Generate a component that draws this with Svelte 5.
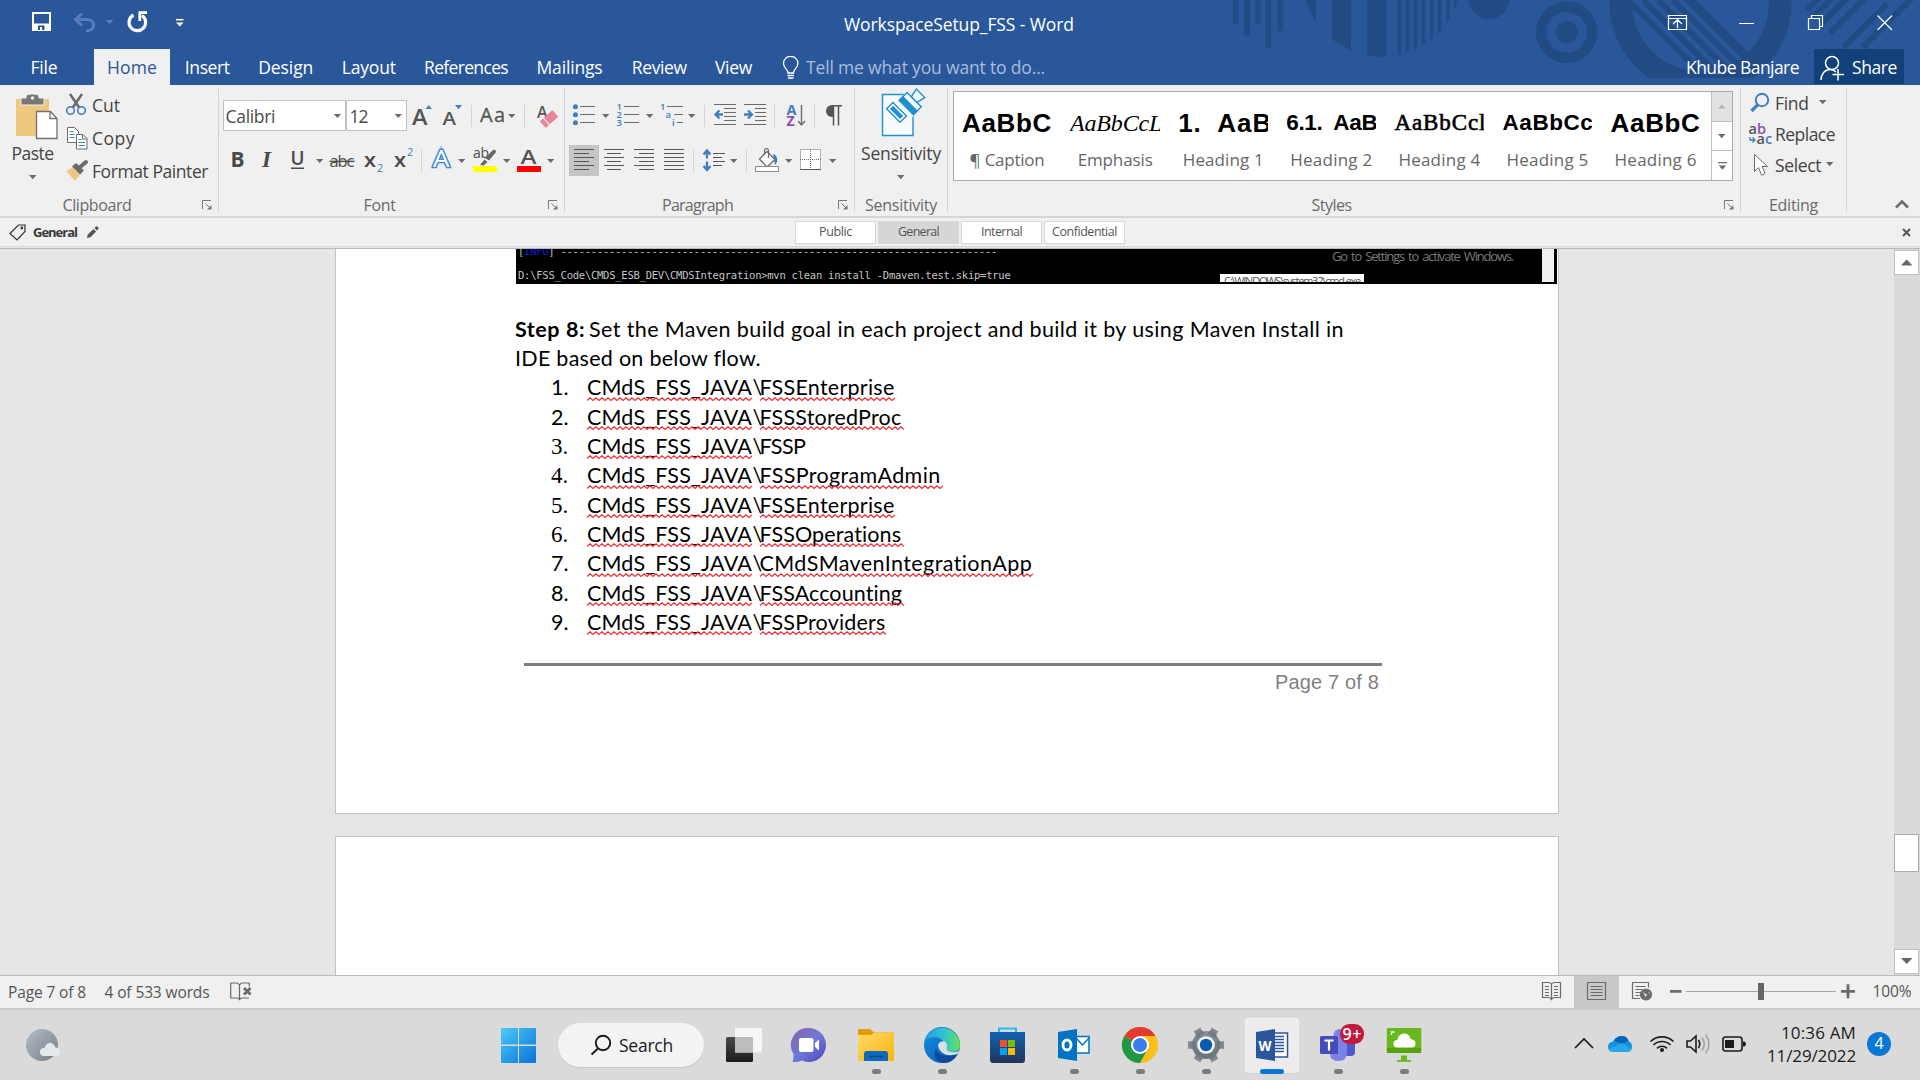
<script>
  // Spreads or tightens a label's letters so that it occupies a given width.
  function fit(node, width) {
    const range = document.createRange();
    range.selectNodeContents(node);
    const natural = range.getBoundingClientRect().width;
    const gaps = Math.max(1, node.textContent.length);
    node.style.letterSpacing = `${(width - natural) / gaps}px`;
  }

  const tabs = [
    { name: 'File', box: 94, text: 27, file: true },
    { name: 'Home', box: 76, text: 50, active: true },
    { name: 'Insert', box: 74.5, text: 45 },
    { name: 'Design', box: 82.5, text: 55 },
    { name: 'Layout', box: 83.5, text: 54 },
    { name: 'References', box: 111, text: 84 },
    { name: 'Mailings', box: 96, text: 66 },
    { name: 'Review', box: 83.5, text: 55 },
    { name: 'View', box: 65, text: 37 }
  ];

  const gallery = [
    { sample: 'AaBbC', name: '¶ Caption', kind: 'big', w: 90, nw: 75 },
    { sample: 'AaBbCcL', name: 'Emphasis', kind: 'emph', w: 92, nw: 75 },
    { sample: '1.  AaB', name: 'Heading 1', kind: 'big', w: 94, nw: 81 },
    { sample: '6.1.  AaB', name: 'Heading 2', kind: 'mid', w: 91, nw: 82 },
    { sample: 'AaBbCcl', name: 'Heading 4', kind: 'serif', w: 92, nw: 82 },
    { sample: 'AaBbCc', name: 'Heading 5', kind: 'mid', w: 91, nw: 82 },
    { sample: 'AaBbC', name: 'Heading 6', kind: 'big', w: 90, nw: 82 }
  ];

  const levels = [
    { name: 'Public', w: 33 },
    { name: 'General', w: 41, on: true },
    { name: 'Internal', w: 41 },
    { name: 'Confidential', w: 65 }
  ];

  const projects = [
    { name: 'FSSEnterprise', w: 135, wave: 136 },
    { name: 'FSSStoredProc', w: 142, wave: 144 },
    { name: 'FSSP', w: 46, wave: 0, serif: true },
    { name: 'FSSProgramAdmin', w: 181, wave: 183, serif: true },
    { name: 'FSSEnterprise', w: 135, wave: 136, serif: true },
    { name: 'FSSOperations', w: 142, wave: 144, serif: true },
    { name: 'CMdSMavenIntegrationApp', w: 273, wave: 273 },
    { name: 'FSSAccounting', w: 143, wave: 144 },
    { name: 'FSSProviders', w: 126, wave: 127 }
  ];

  function zigzag(width) {
    let d = 'M0 3.5';
    for (let x = 3, i = 0; x <= width; x += 3, i++) d += `L${x} ${i % 2 ? 3.5 : 0.8}`;
    return d;
  }

  const rows = [149.5, 153.5, 157.5, 161.5, 165.5, 169.5];
  const dashes = '-'.repeat(72);
  const thinBars = [1397.7, 1405.7, 1413.7, 1421.7, 1430, 1438, 1446.3, 1454];
  const teeth = [0, 60, 120, 180, 240, 300];
</script>

{#snippet caret(x, y)}<path d="M{x} {y}h7.4l-3.7 4z" fill="#6b6b6b" />{/snippet}
{#snippet sep(x, y)}<path d="M{x} {y}v22" stroke="#d2d2d2" />{/snippet}
{#snippet launcher()}
  <svg class="launcher" width="10" height="10" viewBox="0 0 10 10" fill="none" stroke="#777">
    <path d="M.5 9V.5H9M3.5 3.5l4 4" /><path d="M9.5 5v4.500H5z" fill="#777" stroke="none" />
  </svg>
{/snippet}
{#snippet wave(w)}
  <svg class="wave" width={w} height="5"><path d={zigzag(w)} fill="none" stroke="#f0282d" stroke-width="1.1" /></svg>
{/snippet}

<div class="window">
  <header>
    <svg class="decor" viewBox="1220 0 700 85" width="700" height="85" fill="#224b84">
      <defs>
        <clipPath id="disc"><circle cx="1381.700" cy="-22.600" r="79.300" /></clipPath>
        <clipPath id="ring"><path d="M1600 0h200v78h-200z" /></clipPath>
        <clipPath id="hole"><circle cx="1700.500" cy="3" r="68.500" /></clipPath>
      </defs>
      <path d="M1232.700 0h6v24.500h-6zM1244 0h6v35.500h-6zM1255.500 0h5.200v24.500h-5.200zM1265.700 0h5.300v48.500h-5.300zM1277.700 0h5.300v31h-5.300z" />
      <g clip-path="url(#disc)">
        <path d="M1300 0h16v60h-16zM1332 0h19v60h-19zM1367.300 0h19v60h-19z" />
        {#each thinBars as x}<rect {x} y="0" width="3.500" height="60" />{/each}
      </g>
      <circle cx="1489" cy="-1.500" r="20.500" />
      <circle cx="1566.700" cy="32.300" r="25.500" fill="none" stroke="#224b84" stroke-width="10.400" />
      <circle cx="1566.700" cy="32.300" r="11" />
      <g clip-path="url(#ring)">
        <circle cx="1700.500" cy="3" r="91" />
        <g clip-path="url(#hole)">
          <path d="M1620 -10h160v90h-160z" fill="#2a579a" />
          <g stroke="#224b84" stroke-width="6">
            <path d="M1628 0l80 80M1643 0l80 80M1658 0l80 80M1673 0l80 80" />
            <path d="M1687 -3l80 80" stroke-width="9" />
          </g>
        </g>
      </g>
      <path d="M1807 10l12-12M1813 17l20-20M1819 26l30-30M1830 33l36-36M1843 48l44-44M1863 47l50-50" stroke="#224b84" stroke-width="6" />
    </svg>

    <div class="titlebar">
      <svg width="280" height="49" viewBox="0 0 280 49" fill="none">
        <path d="M33 13h17v17H33z" stroke="#fff" stroke-width="2" />
        <path d="M33 23.500h17V30H33z" fill="#fff" /><path d="M38 25.500h6.500V30H42v-3h-2v3h-2z" fill="#2a579a" />
        <path d="M82 13.500l-6.500 6 6.500 6M76 19.500h11c9 0 9 11.500-1 11.500" stroke="#587dba" stroke-width="3" />
        <path d="M105.500 20h8l-4 4z" fill="#587dba" />
        <path d="M133.500 15a8.300 8.300 0 1 0 8.500 .500" stroke="#fff" stroke-width="3.200" />
        <path d="M138.500 12.700h8.500M139.800 12.500v8.500" stroke="#fff" stroke-width="2.800" />
        <path d="M176 19.700h7.500" stroke="#fff" stroke-width="1.500" /><path d="M176 22.500h7.500l-3.700 4z" fill="#fff" />
      </svg>
      <h1><span use:fit={230}>WorkspaceSetup_FSS - Word</span></h1>
      <svg width="280" height="49" viewBox="1640 0 280 49" fill="none" stroke="#fff" stroke-width="1.200">
        <path d="M1668.500 15.500h18v14h-18zM1668.500 18.500h18M1677.500 28v-8M1673 24l4.500-4.300 4.500 4.300" />
        <path d="M1739 23.500h15M1808.500 18.500h11v11h-11zM1811.500 18.500v-3h11v11h-3M1877.500 15.500l14.500 14.500M1892 15.500l-14.500 14.500" />
      </svg>
    </div>

    <nav>
      {#each tabs as tab}
        <div class="tab" class:active={tab.active} class:file={tab.file} style:width="{tab.box}px">
          <span use:fit={tab.text}>{tab.name}</span>
        </div>
      {/each}
      <svg class="bulb" width="18" height="24" viewBox="0 0 18 24" fill="none" stroke="#fff" stroke-width="1.300">
        <path d="M6 17c0-4-4.500-5-4.500-9.500a7.200 7.200 0 0 1 14.400 0C15.900 12 11.500 13 11.500 17zM5.500 19.500h6.500M6 22h5.500" />
      </svg>
      <span class="tell" use:fit={239}>Tell me what you want to do...</span>
      <span class="user"><span use:fit={113}>Khube Banjare</span></span>
      <div class="share">
        <svg width="25" height="26" viewBox="0 0 25 26" fill="none" stroke="#fff" stroke-width="1.500">
          <circle cx="12" cy="8" r="6.500" /><path d="M1 25c0-6 4-10.500 9-10.500 3 0 4.500 1 6 2.500M12.500 19.500H24M18 14v11.500" />
        </svg>
        <span use:fit={45}>Share</span>
      </div>
    </nav>
  </header>

  <section class="ribbon">
    <div class="group clip">
      <div class="body">
        <div class="paste">
          <svg width="60" height="54" viewBox="0 88 60 54">
            <path d="M16 100q0-1 1-1h31q1 0 1 1v36H17q-1 0-1-1z" fill="#edc87e" />
            <path d="M21 98h5v-1q0-3 5-3h3q5 0 5 3v1h5v7H21z" fill="#777" stroke="#f0f0f0" /><circle cx="32.500" cy="98" r="1.700" fill="#f0f0f0" />
            <path d="M36.500 111.500h14l6.500 7v20H36.500z" fill="#fff" stroke="#6f6f6f" stroke-width="1.300" /><path d="M50 111.500v7h7" fill="none" stroke="#6f6f6f" stroke-width="1.300" />
          </svg>
          <span use:fit={42}>Paste</span>
          <svg class="down" width="8" height="5" viewBox="0 0 8 5"><path d="M0 0h7.500l-3.700 4.300z" fill="#6b6b6b" /></svg>
        </div>
        <ul class="verbs">
          <li>
            <svg width="24" height="24" viewBox="65 94 24 24" fill="none">
              <path d="M70 95l9.500 14M82 95l-9.500 14" stroke="#6b6b6b" stroke-width="2.500" />
              <circle cx="70.500" cy="111.500" r="3.800" stroke="#3f7fbf" stroke-width="1.600" /><circle cx="81.500" cy="111.500" r="3.800" stroke="#3f7fbf" stroke-width="1.600" />
            </svg>
            <span use:fit={28}>Cut</span>
          </li>
          <li>
            <svg width="24" height="24" viewBox="65 126 24 24" stroke="#6b6b6b" fill="#fff">
              <path d="M67.500 127.500h7l4 4v11h-11z" /><path d="M76.500 134.500h6.500l4 4v10.500H76.500zM82.500 134.500v4.500h4.500" /><path d="M69.500 131.500h4M69.500 134.500h5M69.500 137.500h5M78.500 139.500h3M78.500 142.500h6.500M78.500 145.500h6.500" stroke="#3f7fbf" />
            </svg>
            <span use:fit={43}>Copy</span>
          </li>
          <li>
            <svg width="24" height="24" viewBox="65 159 24 24">
              <path d="M66 171l6.500-3.500 7.500 7.500-5 6z" fill="#edc87e" /><path d="M72 166.500l4-3.500 8 7.500-4 4z" fill="#6b6b6b" /><path d="M79 168l7-6" stroke="#6b6b6b" stroke-width="4" stroke-linecap="round" />
            </svg>
            <span use:fit={116}>Format Painter</span>
          </li>
        </ul>
      </div>
      <footer><span use:fit={69}>Clipboard</span>{@render launcher()}</footer>
    </div>

    <div class="group font">
      <svg width="345" height="107" viewBox="219 85 345 107" fill="#4a4a4a">
        <path d="M223.500 100.500h122v30h-122zM346.500 100.500h60v30h-60z" fill="#fff" stroke="#c0c0c0" />
        <text x="225.500" y="123" font-size="17.500" textLength="50">Calibri</text>
        <text x="349.500" y="123" font-size="17.500" textLength="19">12</text>
        {@render caret(333.7, 114)}{@render caret(394.5, 114)}
        <g fill="#555" font-weight="600">
          <text x="412" y="124.500" font-size="22" textLength="15.500" lengthAdjust="spacingAndGlyphs">A</text>
          <text x="442.500" y="124.500" font-size="18.500" textLength="13.500" lengthAdjust="spacingAndGlyphs">A</text>
          <text x="480" y="122" font-size="20" font-weight="400" textLength="25" stroke="#555" stroke-width=".3">Aa</text>
          <text x="537" y="118" font-size="17" textLength="10.500" lengthAdjust="spacingAndGlyphs">A</text>
        </g>
        <path d="M425.500 109h6.500l-3.200-4zM455 105h7l-3.500 4.300z" fill="#3f7fbf" />
        {@render sep(471.5, 105)}{@render caret(508, 114)}{@render sep(524.5, 105)}
        <g transform="rotate(-42 549 119)"><rect x="540.500" y="114.500" width="17" height="9" rx="1" fill="#e8839a" /><path d="M545.500 114v10" stroke="#f0f0f0" /></g>
        <text x="230.500" y="167" font-size="21" font-weight="700" textLength="14" lengthAdjust="spacingAndGlyphs">B</text>
        <text x="262" y="167" font-size="23" font-weight="700" font-style="italic" font-family="Liberation Serif">I</text>
        <text x="290.500" y="165" font-size="19.500" font-weight="600" textLength="14" lengthAdjust="spacingAndGlyphs">U</text><path d="M291 167.500h13v1.500h-13z" />
        {@render caret(316, 159)}
        <text x="329.500" y="167" font-size="16.500" textLength="25">abc</text><path d="M329.500 160.700h25v1.400h-25z" />
        <text x="364" y="167" font-size="20" font-weight="600" textLength="12" lengthAdjust="spacingAndGlyphs">x</text><text x="377" y="171.500" font-size="11" fill="#3f7fbf">2</text>
        <text x="394" y="167" font-size="20" font-weight="600" textLength="12" lengthAdjust="spacingAndGlyphs">x</text><text x="407" y="155.500" font-size="11" fill="#3f7fbf">2</text>
        {@render sep(421.500, 150)}
        <path d="M434 167l7-15.500 7.500 15.500M437 161.500h9" fill="none" stroke="#b9d6f2" stroke-width="6" />
        <text x="433" y="167" font-size="23" textLength="16.500" lengthAdjust="spacingAndGlyphs" fill="#fff" stroke="#3f86cc" stroke-width="2.600" paint-order="stroke">A</text>
        {@render caret(458, 159)}
        <text x="473" y="158" font-size="14" textLength="16">ab</text>
        <path d="M480 165l4.500-5.500 3 2.500-4 3.500zM485 158l8-8q3-1 3 2l-7 8.500z" fill="#666" /><path d="M473 166h24v6h-24z" fill="#ff0" />
        {@render caret(503, 159)}
        <text x="520.500" y="163.500" font-size="20" font-weight="600" fill="#555" textLength="16" lengthAdjust="spacingAndGlyphs">A</text><path d="M517 166h24v6h-24z" fill="#f00" />
        {@render caret(547, 159)}
      </svg>
      <footer><span use:fit={32}>Font</span>{@render launcher()}</footer>
    </div>

    <div class="group para">
      <svg width="289" height="107" viewBox="565 85 289 107" fill="none">
        <g fill="#3f7fbf"><circle cx="575.500" cy="106.700" r="2.500" /><circle cx="575.500" cy="114.700" r="2.500" /><circle cx="575.500" cy="122.700" r="2.500" /></g>
        <g stroke="#6b6b6b">
          <path d="M580 106.500h15M580 114.500h15M580 122.500h15M624 106.500h15M624 114.500h15M624 122.500h15M667 106.500h16M674 114.500h9M677 122.500h6" />
          <path d="M714 104.500h22M724 108.500h12M724 112.500h12M724 116.500h12M724 120.500h12M714 124.500h22M744 104.500h22M755 108.500h11M755 112.500h11M755 116.500h11M755 120.500h11M744 124.500h22" />
        </g>
        <g fill="#3f7fbf" font-size="9.500" font-weight="600">
          <text x="616.500" y="110">1</text><text x="616.500" y="118">2</text><text x="616.500" y="126">3</text>
          <text x="660" y="110">1</text><text x="665.500" y="118">a</text><text x="672" y="126">i</text>
        </g>
        {@render caret(602, 114)}{@render caret(646, 114)}{@render caret(688, 114)}{@render sep(704.500, 105)}
        <path d="M723 114.500h-7M719.500 110.500l-4 4 4 4M744 114.500h7M748 110.500l4 4-4 4" stroke="#3f7fbf" stroke-width="2.300" />
        {@render sep(774.500, 105)}
        <text x="786.500" y="114.500" font-size="14.500" font-weight="700" fill="#3f7fbf">A</text><text x="786.500" y="126" font-size="14" font-weight="700" fill="#8a50b0">Z</text>
        <path d="M801.500 105v20M798 121l3.500 4 3.500-4" stroke="#6b6b6b" stroke-width="1.400" />
        {@render sep(814.500, 105)}
        <path d="M833.500 105.500v20M838.500 105.500v20M832 105.700h10" stroke="#555" stroke-width="1.500" /><path d="M834 105v12h-2a6 6 0 0 1 0-12z" fill="#555" />
        <path d="M569 145h30v31h-30z" fill="#c5c5c5" />
        <g stroke="#555">
          {#each rows as y, i}
            <path d="M574 {y}h{i % 2 ? 15 : 20}M{i % 2 ? 607 : 604} {y}h{i % 2 ? 14 : 20}M{i % 2 ? 639 : 634} {y}h{i % 2 ? 15 : 20}M664 {y}h20" />
          {/each}
          <path d="M713 153.500h12M713 157.500h9M713 161.500h12M713 165.500h9" />
        </g>
        {@render sep(693.500, 150)}
        <path d="M707 151v18M703.500 154.500l3.500-4 3.500 4M703.500 166l3.500 4 3.500-4" stroke="#3f7fbf" stroke-width="2.300" /><path d="M704 160h7" stroke="#f0f0f0" stroke-width="3" />
        {@render caret(730, 159)}{@render sep(746.500, 150)}
        <path d="M767 151.500l8 8-8 7.500-7.500-8z" fill="#fff" stroke="#6b6b6b" stroke-width="1.300" /><path d="M764.500 155v-4q0-2.500 2-2.500t2 2.500v7" stroke="#6b6b6b" stroke-width="1.200" /><path d="M773 154q5 1 4 8l-2 3z" fill="#3f7fbf" />
        <path d="M755.500 166.500h23v5h-23z" fill="#fff" stroke="#888" />
        {@render caret(785, 159)}
        <path d="M800.500 149.500h20v20h-20z" fill="#fff" stroke="#6b6b6b" stroke-dasharray="1 1" /><path d="M810.500 149v20M800 159.500h21" stroke="#6b6b6b" stroke-dasharray="1 1" /><path d="M800 169.500h21" stroke="#555" />
        {@render caret(829, 159)}
      </svg>
      <footer><span use:fit={71}>Paragraph</span>{@render launcher()}</footer>
    </div>

    <div class="group sens">
      <div class="body">
        <svg width="50" height="54" viewBox="880 88 50 54" fill="#f8fbfd" stroke="#1e8fd0" stroke-width="1.400">
          <path d="M885.500 94.500h30.500v41h-30.500z" />
          <g transform="rotate(45 908 106)">
            <path d="M897 112h19v9h-19z" /><path d="M900 115h13v3h-13z" fill="#1e8fd0" />
            <path d="M901 94h18v13h-18z" stroke="#f0f0f0" stroke-width="4" /><path d="M900 95h20v11h-20z" /><path d="M900 101h20v5h-20z" fill="#1e8fd0" />
            <path d="M906 95l-2-9h12l-2 9z" />
          </g>
        </svg>
        <span use:fit={80}>Sensitivity</span>
        <svg class="down" width="8" height="5" viewBox="0 0 8 5"><path d="M0 0h7.500l-3.700 4.300z" fill="#6b6b6b" /></svg>
      </div>
      <footer><span use:fit={72}>Sensitivity</span></footer>
    </div>

    <div class="group styles">
      <div class="gallery">
        {#each gallery as item}
          <div class="cell">
            <div class="sample {item.kind}"><span use:fit={item.w}>{item.sample}</span></div>
            <span class="name" use:fit={item.nw}>{item.name}</span>
          </div>
        {/each}
        <div class="spin">
          <i class="off"><svg width="8" height="5"><path d="M0 4.500h7.500L3.700 .3z" fill="#b5b5b5" /></svg></i>
          <i><svg width="8" height="5"><path d="M0 0h7.500L3.700 4.300z" fill="#6b6b6b" /></svg></i>
          <i><svg width="9" height="8"><path d="M0 0h9v1.200H0zM.7 3.500h7.500L4.400 7.800z" fill="#6b6b6b" /></svg></i>
        </div>
      </div>
      <footer><span use:fit={40}>Styles</span>{@render launcher()}</footer>
    </div>

    <div class="group edit">
      <ul class="verbs">
        <li>
          <svg width="24" height="24" viewBox="1748 91 24 24" fill="none" stroke="#3f7fbf"><circle cx="1762" cy="100" r="6.200" stroke-width="2" /><path d="M1758 104.500l-6.500 6.500" stroke-width="3.200" /></svg>
          <span use:fit={33.500}>Find</span><svg class="car" width="8" height="5"><path d="M0 0h7.500L3.700 4.300z" fill="#6b6b6b" /></svg>
        </li>
        <li>
          <svg width="24" height="24" viewBox="1748 122 24 24" fill="#555" font-size="14.500" font-weight="600">
            <text x="1748.500" y="134">a<tspan fill="#8a50b0">b</tspan></text><text x="1756.500" y="144">a<tspan fill="#3f7fbf">c</tspan></text>
            <path d="M1750 137v3h5M1752.500 137.500l2.500 2.500-2.500 2.500" fill="none" stroke="#3f7fbf" stroke-width="1.300" />
          </svg>
          <span use:fit={60}>Replace</span>
        </li>
        <li>
          <svg width="24" height="24" viewBox="1748 153 24 24" fill="#fff" stroke="#6b6b6b"><path d="M1754.500 154.500v17l4-4 3 7.500q3 .5 3.500-2l-3-6.500h5.500z" /></svg>
          <span use:fit={46}>Select</span><svg class="car tight" width="8" height="5"><path d="M0 0h7.500L3.700 4.300z" fill="#6b6b6b" /></svg>
        </li>
      </ul>
      <footer><span use:fit={49}>Editing</span></footer>
    </div>
    <svg class="collapse" width="14" height="10" viewBox="0 0 14 10" fill="none" stroke="#6b6b6b" stroke-width="2.600"><path d="M1 8.500l6-6 6 6" /></svg>
  </section>

  <section class="labels">
    <svg width="17" height="17" viewBox="0 0 17 17" fill="none" stroke="#333" stroke-width="1.200"><path d="M9.500 1h6.500v6.500l-8 8.500L1 9.500z" /><circle cx="12.800" cy="4" r=".8" /></svg>
    <b use:fit={44}>General</b>
    <svg class="pencil" width="13" height="13" viewBox="0 0 13 13" fill="#555"><path d="M1 12l.8-3.500L7.500 3l2.600 2.600L4.500 11.200zM8.500 2l1.500-1.500q1-.5 2 .5t.4 2L11 4.500z" /></svg>
    <div class="levels">
      {#each levels as l}<div class:on={l.on}><span use:fit={l.w}>{l.name}</span></div>{/each}
    </div>
    <svg class="x" width="9" height="9" viewBox="0 0 9 9" stroke="#555" stroke-width="2"><path d="M1 1l7 7M8 1L1 8" /></svg>
  </section>

  <main>
    <div class="canvas">
      <article class="page first">
        <div class="console">
          <div class="lines">
            <p><span use:fit={479}>[<em>INFO</em>] {dashes}</span></p>
            <p><span use:fit={492.500}>D:\FSS_Code\CMDS_ESB_DEV\CMDSIntegration&gt;mvn clean install -Dmaven.test.skip=true</span></p>
          </div>
          <div class="over">
            <span class="activate" use:fit={181}>Go to Settings to activate Windows.</span>
            <span class="tip"><span use:fit={136}>C:\WINDOWS\system32\cmd.exe</span></span>
          </div>
          <div class="bar"></div>
        </div>
        <p class="step"><b use:fit={70}>Step 8:</b><span class="rest" use:fit={755}>Set the Maven build goal in each project and build it by using Maven Install in</span></p>
        <p class="step"><span use:fit={246}>IDE based on below flow.</span></p>
        <ol>
          {#each projects as p, i}
            <li>
              <span class="num" class:times={p.serif}>{i + 1}.</span>
              <span class="word root"><span use:fit={165}>CMdS_FSS_JAVA</span>{@render wave(166)}</span>
              <span class="slash">\</span>
              <span class="word"><span use:fit={p.w}>{p.name}</span>{#if p.wave}{@render wave(p.wave)}{/if}</span>
            </li>
          {/each}
        </ol>
        <div class="foot"><span use:fit={104}>Page 7 of 8</span></div>
      </article>
      <article class="page second"></article>
    </div>
    <aside>
      <i><svg width="12" height="7"><path d="M0 6.500h11.500L5.700 .5z" fill="#666" /></svg></i>
      <b></b>
      <i><svg width="12" height="7"><path d="M0 0h11.500L5.700 6z" fill="#666" /></svg></i>
    </aside>
  </main>

  <section class="status">
    <span class="pg" use:fit={78}>Page 7 of 8</span>
    <span class="wc" use:fit={105}>4 of 533 words</span>
    <svg class="proof" width="22" height="19" viewBox="0 0 22 19" fill="none" stroke="#6b6b6b" stroke-width="1.200"><path d="M9.500 3q-1.500-2-3-2H.7v15H7q2 0 2.500 2 .5-2 2.500-2h7M9.500 3v14M9.500 3q1.500-2 3-2h6.700v3.500" /><path d="M14 6l6.500 6.500M20.500 6L14 12.500" stroke-width="2.800" /></svg>
    <svg class="views" width="380" height="32" viewBox="1540 976 380 32" fill="none" stroke="#6b6b6b" stroke-width="1.200">
      <path d="M1574 976h45v32h-45z" fill="#c8c8c8" stroke="none" />
      <path d="M1551.500 984q-1.500-1.500-3-1.500h-6v15h6q2 0 3 2 1-2 3-2h6v-15h-6q-1.500 0-3 1.500v15M1545 986.500h4M1545 989.500h4M1545 992.500h4M1545 995.500h4M1554 986.500h4M1554 989.500h4M1554 992.500h4M1554 995.500h4" />
      <path d="M1587.500 982.500h18v17h-18zM1590.500 986.500h12M1590.500 989.500h12M1590.500 992.500h12M1590.500 995.500h12" />
      <path d="M1640 998.500h-7.500v-16h16v5M1635.500 986.500h10M1635.500 989.500h7M1635.500 992.500h5M1635.500 995.500h4" />
      <circle cx="1646" cy="994.500" r="5.500" fill="#6b6b6b" /><path d="M1642.500 991l2 2.500 2.500 1-1.500 2.500zM1648 991.500l1.500 1.500 .5 2z" fill="#f0f0f0" stroke="none" />
      <path d="M1670 991.300h11.500M1841 991.300h14M1848 984.300v14" stroke-width="2.800" /><path d="M1686 991.500h150" stroke="#a5a5a5" /><path d="M1758 983h6v17h-6z" fill="#666" stroke="none" />
      <text x="1872.500" y="997" textLength="39" fill="#555" stroke="none" font-size="15.500">100%</text>
    </svg>
  </section>

  <section class="taskbar">
    <svg class="weather" width="48" height="44" viewBox="20 1022 48 44">
      <defs>
        <linearGradient id="moon" x2="1" y2="1"><stop stop-color="#b4bec9" /><stop offset="1" stop-color="#757d86" /></linearGradient>
        <linearGradient id="win" x2="1" y2="1"><stop stop-color="#4cc8fb" /><stop offset="1" stop-color="#0873d6" /></linearGradient>
        <linearGradient id="chat" x2="1" y2="1"><stop stop-color="#8a62a8" /><stop offset=".5" stop-color="#6d79d8" /><stop offset="1" stop-color="#4f46c0" /></linearGradient>
        <linearGradient id="fold" x2="1" y2="1"><stop stop-color="#ffd969" /><stop offset="1" stop-color="#f8b50c" /></linearGradient>
        <linearGradient id="edge1" x2="1"><stop stop-color="#1f9fe8" /><stop offset=".6" stop-color="#36c5c9" /><stop offset="1" stop-color="#66e352" /></linearGradient>
        <linearGradient id="edge2" x2="1" y2="1"><stop stop-color="#1193e0" /><stop offset="1" stop-color="#0b55ae" /></linearGradient>
        <linearGradient id="store" x2="0" y2="1"><stop stop-color="#0f62b0" /><stop offset="1" stop-color="#22355c" /></linearGradient>
        <linearGradient id="dark" x2="0" y2="1"><stop stop-color="#4a4a4a" /><stop offset="1" stop-color="#1c1c1c" /></linearGradient>
        <linearGradient id="gear" x2="0" y2="1"><stop stop-color="#8a8f95" /><stop offset="1" stop-color="#67727d" /></linearGradient>
      </defs>
      <circle cx="42" cy="1045" r="16" fill="url(#moon)" />
      <path d="M44 1056q-4 0-4-4.200t4.500-3.800q1.500-5 5.500-5t5.500 4.500q4.500 0 4.500 4.300t-4 4.200z" fill="#e4e9ee" />
    </svg>
    <div class="apps">
      <svg width="52" height="64" viewBox="493 1016 52 64"><path d="M501 1029q0-1 1-1h16v16.500h-17zM519 1028h16q1 0 1 1v15.500h-17zM501 1046h17v17h-16q-1 0-1-1zM519 1046h17v16q0 1-1 1h-16z" fill="url(#win)" /></svg>
      <div class="search">
        <svg width="22" height="22" viewBox="590 1034 22 22" fill="none" stroke="#1a1a1a" stroke-width="1.900"><circle cx="603" cy="1043" r="7.200" /><path d="M598 1048.500l-6.500 6" /></svg>
        <span use:fit={54}>Search</span>
      </div>
      <svg width="726" height="72" viewBox="712 1008 726 72">
        <rect x="726" y="1037" width="27" height="25" rx="1.500" fill="url(#dark)" /><rect x="735" y="1028" width="27" height="24.500" rx="1" fill="#f6f6f6" /><path d="M735 1037h18v15.500h-18z" fill="#bdbdbd" />
        <path d="M809 1028a17 17 0 1 1-7 32.500q-4 1.800-9.500 1.500 1.500-4 1-8A17 17 0 0 1 809 1028z" fill="url(#chat)" /><rect x="799" y="1038" width="14.500" height="14" rx="2" fill="#fff" /><path d="M815 1043l4-3.500v11l-4-3.500z" fill="#fff" />
        <path d="M858 1030q0-1 1-1h11l4 3.500h19q1 0 1 1v6h-36z" fill="#dd9c09" /><path d="M858 1035h13l3-2.500h20V1061H858z" fill="url(#fold)" /><path d="M864 1061v-7q0-3 3-3h18q3 0 3 3v7z" fill="#0c69bd" /><path d="M869 1056.500h14" stroke="#064a87" stroke-width="1.600" />
        <circle cx="942" cy="1045" r="18" fill="url(#edge2)" />
        <path d="M925 1040a18 18 0 0 1 35 5q0 7-8 7-7 0-7-3.500 1.500-4-1-7-9-8-19-1.500z" fill="url(#edge1)" />
        <path d="M936 1048q2 9 13 8 6-.5 9-2.500-5 10-15 9.500-12-3-7-15z" fill="#10499a" />
        <path d="M938 1045a5.500 5.500 0 0 1 7-3.500q3 3 1.500 7 0 3.500 7 3.800 3 0 5.500-1.800l-1.500 3.500q-6 2-12 .5-7-3-7.500-9.500z" fill="#d9dfe3" />
        <path d="M999 1033v-4.500h17v4.500" fill="none" stroke="#2cb9ef" stroke-width="2" /><path d="M990 1032h35v28q0 3-3 3h-29q-3 0-3-3z" fill="url(#store)" />
        <path d="M1000 1040h7v7h-7z" fill="#f25022" /><path d="M1008 1040h7v7h-7z" fill="#7fba00" /><path d="M1000 1048h7v7h-7z" fill="#00a4ef" /><path d="M1008 1048h7v7h-7z" fill="#ffb900" />
        <path d="M1076 1036.500h13v16.500h-13z" fill="#fff" stroke="#0072c6" stroke-width="1.500" /><path d="M1076 1038l6.500 7 6.500-7" fill="none" stroke="#0072c6" stroke-width="1.500" /><path d="M1058 1032l19-3v32l-19-3z" fill="#0072c6" /><ellipse cx="1067" cy="1045" rx="4" ry="5" fill="none" stroke="#fff" stroke-width="2.800" />
        <circle cx="1140" cy="1045" r="18" fill="#fcc01c" /><path d="M1140 1045L1124.400 1036a18 18 0 0 1 31.200 0z" fill="#e33b2e" /><path d="M1124.400 1036a18 18 0 0 0 15.600 27l8-13.500-8-4.500z" fill="#229746" /><path d="M1140 1036h15.600a18 18 0 0 1-15.600 27l8-14z" fill="#fcc01c" />
        <circle cx="1140" cy="1045" r="9" fill="#fff" /><circle cx="1140" cy="1045" r="7" fill="#3a7df0" />
        <g fill="url(#gear)"><circle cx="1206" cy="1045" r="14" />{#each teeth as a}<path d="M1201.500 1034l1-5.500q0-1.500-1.500-1.500h10q-1.500 0-1.500 1.500l1 5.500z" transform="rotate({a + 30} 1206 1045)" />{/each}</g>
        <circle cx="1206" cy="1045" r="8.800" fill="#f4f4f4" /><circle cx="1206" cy="1045" r="6.200" fill="#0b5cae" />
        <rect x="1244" y="1017" width="56" height="56.500" rx="4" fill="#ececec" stroke="#cfcfcf" stroke-width=".8" />
        <path d="M1272 1033h15.500v24H1272z" fill="#fff" stroke="#2b579a" stroke-width="1.500" /><path d="M1273 1036.500h11M1273 1039.500h11M1273 1042.500h11M1273 1045.500h11M1273 1048.500h11M1273 1051.500h11" stroke="#2b579a" stroke-width="1.300" /><path d="M1256 1032l19-3v32l-19-3z" fill="#2b579a" /><text x="1258.500" y="1050.500" font-size="14" font-weight="700" fill="#fff" textLength="13" lengthAdjust="spacingAndGlyphs">W</text>
        <path d="M1347 1040h8v12q0 4-4 4h-6z" fill="#5059c9" /><circle cx="1339.500" cy="1035" r="6" fill="#7b83eb" /><path d="M1330 1040h17v12q0 9-8.500 9t-8.500-7z" fill="#7b83eb" /><rect x="1320" y="1036" width="18" height="18" rx="1.500" fill="#454cb5" /><path d="M1324.500 1040.500h9M1329 1040.500v10" stroke="#fff" stroke-width="2.200" />
        <rect x="1340" y="1024" width="24" height="20" rx="9.500" fill="#c4193c" /><text x="1342.500" y="1039.500" font-size="16" font-weight="600" fill="#fff" textLength="19">9+</text>
        <path d="M1388 1028h32q1.300 0 1.300 1.300v23.500h-34.500v-23.500q0-1.300 1.200-1.300z" fill="#67b81c" /><path d="M1387 1048h34v5h-34z" fill="#57a30f" /><path d="M1401 1055.500h6v4.500h4v1.800h-14v-1.800h4z" fill="#67b81c" /><path d="M1391.500 1035v-3h3" fill="none" stroke="#fff" stroke-width="1.300" /><path d="M1397 1047.500q-3.500 0-3.500-3.800t3.800-3.700q1.200-6.500 6.700-6.500t6.500 5.500q5 .5 5 4.500t-4 4z" fill="#fff" />
        <g fill="#7b7b7b">{#each [872, 938, 1070, 1136, 1202, 1334, 1400] as x}<rect {x} y="1069" width="9" height="5" rx="2.500" />{/each}</g><rect x="1260" y="1069" width="24" height="5" rx="2.500" fill="#0a78d4" />
      </svg>
    </div>
    <svg class="tray" width="190" height="40" viewBox="1565 1024 190 40" fill="none" stroke="#1c1c1c" stroke-width="1.600">
      <path d="M1575 1048l9-9 9 9" />
      <g stroke="none"><path d="M1613 1052q-5-.3-5-5t5-5.500q3-5.500 8.500-5.500 5 0 7 5 3.500 1.500 3.500 5.500 0 5-5 5.500z" fill="#1490df" /><path d="M1614 1041q3-5 8-5t6.500 5l-6 3z" fill="#0764b9" /><path d="M1609 1049l13-6 9.500 6q-1 3-5 3h-13q-3.500 0-4.500-3z" fill="#28a8ea" /></g>
      <path d="M1650.500 1041.500a16.500 16.500 0 0 1 23 0M1653.500 1045a12 12 0 0 1 17 0M1657 1048.300a7.300 7.300 0 0 1 10 0" /><circle cx="1662" cy="1050" r="2" fill="#1c1c1c" stroke="none" />
      <path d="M1687 1041h3.500l5.500-5v16l-5.500-5h-3.500z" /><path d="M1698.500 1040q2.500 4 0 8" /><path d="M1702 1037.500q4.500 6.500 0 13M1705.500 1034.500q7 9.500 0 19" stroke="#a3a3a3" />
      <rect x="1723" y="1037" width="19" height="14" rx="2.500" /><path d="M1743 1041.500h1.500q1.500 1 1.500 2.500t-1.500 2.500h-1.500" fill="#1c1c1c" stroke="none" /><path d="M1725 1040h9v8h-9z" fill="#1c1c1c" stroke="none" />
    </svg>
    <div class="clock"><span use:fit={75}>10:36 AM</span><span use:fit={89}>11/29/2022</span></div>
    <div class="count">4</div>
  </section>
</div>

<style>
  :global(body) { margin: 0; overflow: hidden; }
  .window { width: 1920px; height: 1080px; display: flex; flex-direction: column; overflow: hidden; background: #e6e6e6; font-family: 'Open Sans', 'Noto Sans', sans-serif; font-size: 17.5px; color: #444; white-space: nowrap; }
  svg { display: block; flex: none; }
  ul, ol, p, h1 { margin: 0; padding: 0; list-style: none; font-weight: 400; }

  header { position: relative; height: 85px; flex: none; background: #2a579a; color: #fff; }
  .decor { position: absolute; right: 0; top: 0; }
  .titlebar { position: relative; display: grid; grid-template-columns: 280px 1fr 280px; height: 49px; }
  h1 { font-size: 17.5px; line-height: 49px; text-align: center; padding-right: 2px; }
  nav { position: relative; display: flex; height: 36px; line-height: 36px; }
  .tab { flex: none; text-align: center; }
  .file { box-sizing: border-box; padding-right: 6px; }
  .active { background: #f0f0f0; color: #2a579a; }
  .bulb { margin: 7px 6px 0 16px; }
  .tell { color: #a9bddd; }
  .user { margin-left: auto; margin-right: 15px; }
  .share { display: flex; gap: 7px; width: 84px; padding-left: 6px; margin-right: 16px; height: 35px; background: #124078; }
  .share svg { margin-top: 6px; }

  .ribbon { display: flex; height: 131px; flex: none; background: #f0f0f0; border-bottom: 2px solid #d5d5d5; }
  .group { position: relative; flex: none; box-sizing: border-box; height: 127px; border-right: 1px solid transparent; border-image: linear-gradient(transparent 4px, #d2d2d2 4px) 1; }
  .group footer { position: absolute; bottom: -6px; left: 0; right: 0; height: 25px; line-height: 25px; font-size: 16px; color: #6a6a6a; text-align: center; }
  .launcher { position: absolute; right: 6px; bottom: 8px; }
  .clip { width: 219px; }
  .clip footer { padding-right: 24px; }
  .clip .body { display: flex; }
  .paste { width: 65px; padding-top: 3px; text-align: center; line-height: 22px; display: flex; flex-direction: column; align-items: center; }
  .paste svg:first-child { align-self: flex-start; }
  .down { margin-top: 11px; }
  .verbs li { display: flex; align-items: center; gap: 3px; height: 33px; }
  .verbs { padding-top: 3px; }
  .font { width: 346px; }
  .font footer { padding-right: 24px; right: 8px; left: 8px; }
  .font .launcher { right: -2px; }
  .para { width: 290px; }
  .para footer { padding-right: 24px; }
  .sens { width: 93px; }
  .sens .body { padding-top: 3px; line-height: 22px; display: flex; flex-direction: column; align-items: center; }
  .sens .body svg:first-child { margin-left: 2px; }
  .styles { width: 793px; }
  .styles footer { padding-right: 25px; }
  .gallery { display: flex; box-sizing: border-box; width: 780px; height: 90px; margin: 6px 0 0 5px; border: 1px solid #ababab; background: #fff; }
  .cell { width: 108.100px; flex: none; text-align: center; color: #666; font-size: 17px; }
  .cell > .name { margin-left: -2px; }
  .sample { width: 90px; margin: 8px 0 0 8px; height: 46px; line-height: 46px; overflow: hidden; color: #000; text-align: left; white-space: pre; }
  .big { font: 700 26px/46px 'Liberation Sans', sans-serif; }
  .mid { font: 700 22.500px/46px 'Liberation Sans', sans-serif; }
  .emph { font: italic 24px/46px 'Liberation Serif', serif; }
  .serif { font: 400 23px/46px 'Liberation Serif', serif; -webkit-text-stroke: .6px #000; }
  .name { line-height: 27px; }
  .spin { width: 21px; margin-left: auto; display: flex; flex-direction: column; }
  .spin i { flex: 1; display: grid; place-items: center; border-left: 1px solid #c0c0c0; border-bottom: 1px solid #c0c0c0; }
  .spin i:last-child { border-bottom: 0; }
  .spin .off { background: #e2e2e2; }
  .edit { width: 106px; }
  .edit .verbs { padding: 2px 0 0 7px; }
  .edit li { height: 31px; }
  .car { margin-left: 7px; }
  .tight { margin-left: 2px; }
  .collapse { margin: 114px 0 0 48px; }

  .labels { display: flex; align-items: center; height: 28px; flex: none; padding: 0 9px; background: #f0f0f0; border-bottom: 1px solid #d9d9d9; box-shadow: 0 1px #e4e4e4, 0 2px #b9b9b9; font-size: 13px; margin-bottom: 2px; }
  .labels b { margin-left: 7px; color: #3a3a3a; width: 44px; }
  .pencil { margin-left: 9px; }
  .levels { display: flex; gap: 2px; margin-left: 696px; }
  .levels div { box-sizing: border-box; width: 81px; height: 23px; line-height: 20px; border: 1px solid #d6d6d6; background: #fff; text-align: center; font-size: 12.500px; color: #555; }
  .levels .on { background: #d6d6d6; }
  .labels .x { margin-left: auto; }

  main { display: flex; height: 726px; flex: none; overflow: hidden; }
  .canvas { width: 1894px; padding-left: 335px; box-sizing: border-box; }
  .page { box-sizing: border-box; width: 1224px; background: #fff; border: 1px solid #c2c2c2; }
  .first { height: 565px; border-top: 0; padding-left: 179px; margin-bottom: 22px; color: #000; font: 21.500px/29.350px Lato, sans-serif; }
  .second { height: 300px; }
  .console { display: flex; width: 1041px; height: 35px; overflow: hidden; background: #000; margin-left: 1px; }
  .lines { width: 700px; padding-left: 2px; font: 10.500px/23.500px 'DejaVu Sans Mono', monospace; color: #c4c4c4; margin-top: -9px; }
  .lines em { font-style: normal; color: #1414d8; }
  .over { width: 324px; font: 13px/16px 'Open Sans', sans-serif; color: #7a7a7a; }
  .activate { display: block; margin: -1px 0 10px 114px; word-spacing: 2px; }
  .tip { display: block; width: 140px; height: 8px; padding-left: 4px; margin-left: 2px; overflow: hidden; background: #fff; color: #555; font-size: 11px; line-height: 14px; }
  .bar { width: 12px; height: 33px; background: #f0f0f0; }
  .step { display: flex; height: 29.350px; }
  .console + .step { margin-top: 30.500px; }
  .step b { width: 74px; }
  li .word { position: relative; }
  ol li { display: flex; height: 29.350px; padding-left: 36px; }
  .num { width: 36px; }
  .times { font-family: 'Liberation Serif', serif; font-size: 23px; }
  .root { width: 165.500px; }
  .slash { width: 7px; }
  .wave { position: absolute; left: 0; top: 23.500px; }
  .foot { box-sizing: border-box; width: 858px; margin: 25.500px 0 0 9px; border-top: 3px solid #7f7f7f; text-align: right; padding: 2px 3px 0 0; color: #7f7f7f; font: 20px/28px 'Liberation Sans', sans-serif; }

  aside { width: 26px; background: #dadada; display: flex; flex-direction: column; padding: 1px 1px 1px 0; box-sizing: border-box; }
  aside i, aside b { box-sizing: border-box; height: 25px; border: 1px solid #c0c0c0; background: #fff; display: grid; place-items: center; }
  aside b { height: 38px; margin: 559px 0 77px; border-color: #ababab; }

  .status { display: flex; height: 32px; flex: none; line-height: 32px; font-size: 15.500px; color: #555; background: #f0f0f0; border-top: 1px solid #bababa; }
  .pg { margin-left: 8px; width: 96.500px; }
  .wc { width: 125px; }
  .proof { margin-top: 6px; }
  .views { margin-left: auto; }

  .taskbar { display: flex; flex: none; height: 72px; background: #dadada; box-shadow: inset 0 2px #cacaca; color: #1a1a1a; }
  .weather { margin: 14px 0 0 20px; }
  .apps { display: flex; margin-left: 425px; }
  .apps > svg:first-child { margin-top: 8px; }
  .search { box-sizing: border-box; width: 146px; height: 44px; margin: 15px 8px 0 13px; padding-left: 32px; border-radius: 22px; background: #f3f3f3; box-shadow: 0 1px 1px #c5c5c5; display: flex; align-items: center; gap: 7px; }
  .tray { margin: 16px 0 0 127px; }
  .clock { width: 101px; margin: 13px 1px 0 0; text-align: right; line-height: 23px; font-size: 17px; display: flex; flex-direction: column; align-items: flex-end; }
  .count { width: 24px; height: 24px; margin: 24px 0 0 10px; border-radius: 50%; background: #0a78d4; color: #fff; text-align: center; line-height: 23px; font-size: 16px; }
</style>
